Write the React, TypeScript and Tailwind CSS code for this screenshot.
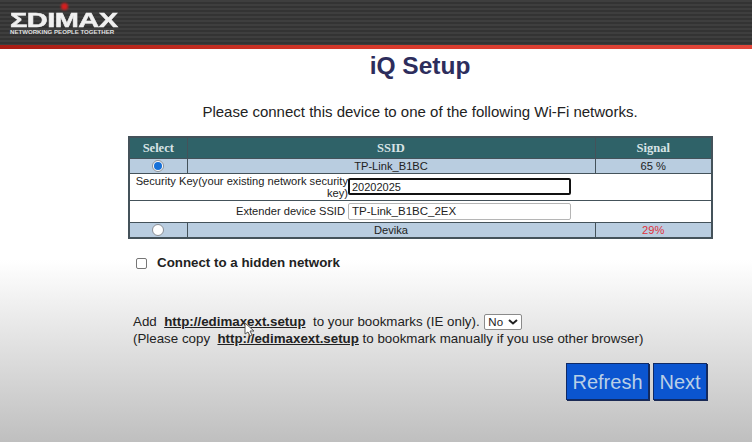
const CELL = 'border border-[#44525a] p-0 text-center align-middle';

function Radio({ checked }: { checked?: boolean }) {
  return (
    <span className="mx-auto mt-[1px] flex size-[12px] items-center justify-center rounded-full border border-[#8a8f96] bg-white">
      {checked && <span className="size-[8px] rounded-full bg-[#1670d8]" />}
    </span>
  );
}

function Logo() {
  return (
    <div className="relative ml-[10px] w-[108px] pt-[12px] text-[#f0f0f0]">
      <span className="absolute left-[51px] top-[3px] size-[7px] rounded-full bg-[#d81e1e] blur-[1px]" />
      <div className="h-[16px] origin-top-left scale-x-[1.38] font-['Liberation_Sans',sans-serif] text-[21px] font-bold leading-[16px] tracking-[-0.4px] [-webkit-text-stroke:0.5px_#f0f0f0]">
        ΣDIMAX
      </div>
      <div className="whitespace-nowrap font-['Liberation_Sans',sans-serif] text-[6.1px] font-bold leading-[7px] text-[#e0e0e0]">
        NETWORKING PEOPLE TOGETHER
      </div>
    </div>
  );
}

export default function App() {
  return (
    <div className="flex h-[442px] w-[752px] flex-col overflow-hidden bg-[linear-gradient(to_bottom,#ffffff_0px,#ffffff_260px,#bfbfbf_442px)] font-['Liberation_Sans',Arial,sans-serif] text-[#222]">
      <header className="h-[51px] shrink-0 bg-white">
        <div className="h-[45px] bg-[repeating-linear-gradient(to_bottom,#3e3e3e_0px,#3e3e3e_2px,#333333_2px,#333333_4px)]">
          <Logo />
        </div>
        <div className="h-[4px] bg-gradient-to-r from-[#a81c14] via-[#d83a2c] to-[#e2463a]" />
      </header>

      <h1 className="ml-[88px] mt-[1px] text-center text-[24.5px] font-bold leading-[28px] text-[#2d2d5c]">iQ Setup</h1>

      <p className="ml-[88px] mt-[23px] text-center text-[15px] leading-[18px]">
        Please connect this device to one of the following Wi-Fi networks.
      </p>

      <table className="ml-[128px] mt-[15px] w-[583px] table-fixed border-collapse border-2 border-[#44525a] text-[11.15px] leading-[12px]">
        <colgroup>
          <col className="w-[58px]" />
          <col className="w-[408px]" />
          <col className="w-[117px]" />
        </colgroup>
        <thead>
          <tr className="h-[21px] bg-[#2f6268] font-['Liberation_Serif',serif] text-[12.5px] font-bold text-[#d8e4e6]">
            <th className={CELL}>Select</th>
            <th className={CELL}>SSID</th>
            <th className={CELL}>Signal</th>
          </tr>
        </thead>
        <tbody>
          <tr className="h-[15px] bg-[#b9cde0]">
            <td className={CELL}><Radio checked /></td>
            <td className={CELL}>TP-Link_B1BC</td>
            <td className={CELL}>65 %</td>
          </tr>
          <tr className="h-[27px] bg-white">
            <td colSpan={3} className="border border-[#44525a] p-0">
              <div className="flex items-center">
                <div className="w-[218px] shrink-0 text-right leading-[12px]">
                  Security Key(your existing network security key)
                </div>
                <input
                  readOnly
                  value="20202025"
                  className="h-[17px] w-[223px] rounded-[2px] border-2 border-[#111] bg-white px-[2px] text-[11px] text-[#222] outline-none"
                />
              </div>
            </td>
          </tr>
          <tr className="h-[22px] bg-white">
            <td colSpan={3} className="border border-[#44525a] p-0">
              <div className="flex items-center">
                <div className="w-[218px] shrink-0 pr-[3px] text-right">Extender device SSID</div>
                <input
                  readOnly
                  value="TP-Link_B1BC_2EX"
                  className="h-[17px] w-[223px] rounded-[2px] border border-[#b5b5b5] bg-white px-[3px] text-[11.5px] text-[#222] outline-none"
                />
              </div>
            </td>
          </tr>
          <tr className="h-[16px] bg-[#b9cde0]">
            <td className={CELL}><Radio /></td>
            <td className={CELL}>Devika</td>
            <td className={`${CELL} text-[#e0333c]`}>29%</td>
          </tr>
        </tbody>
      </table>

      <div className="ml-[136px] mt-[16px] flex items-center gap-[10px]">
        <span className="size-[11px] rounded-[2px] border border-[#767676] bg-white" />
        <span className="text-[13.33px] font-bold leading-[16px]">Connect to a hidden network</span>
      </div>

      <div className="ml-[133px] mt-[42px] text-[13.33px] leading-[18px]">
        <div className="flex h-[17px] items-center whitespace-pre">
          <span>Add  </span>
          <a className="font-bold underline">http://edimaxext.setup</a>
          <span>  to your bookmarks (IE only). </span>
          <span className="ml-[1px] flex h-[16px] w-[38px] items-center justify-between rounded-[2px] border border-[#8a8a8a] bg-white px-[3px] text-[11.5px]">
            No
            <svg width="10" height="6" viewBox="0 0 10 6" fill="none" stroke="#222" strokeWidth="2">
              <path d="M1 1l4 3.5L9 1" />
            </svg>
          </span>
        </div>
        <div className="whitespace-pre">
          <span>(Please copy  </span>
          <a className="font-bold underline">http://edimaxext.setup</a>
          <span> to bookmark manually if you use other browser)</span>
        </div>
      </div>

      <div className="ml-[566px] mt-[15px] flex gap-[4px]">
        <button className="h-[37px] w-[83px] border border-[#0f2a66] bg-[#0b55d0] text-[20px] leading-none text-[#b9cfe6] shadow-[1px_1px_0_#1a2a55]">
          Refresh
        </button>
        <button className="h-[37px] w-[54px] border border-[#0f2a66] bg-[#0b55d0] text-[20px] leading-none text-[#b9cfe6] shadow-[1px_1px_0_#1a2a55]">
          Next
        </button>
      </div>

      {/* mouse pointer over the link */}
      <svg className="absolute left-[244px] top-[322px]" width="12" height="16" viewBox="0 0 12 16">
        <path d="M1 1v11l3-2 2 4 2-1-2-4h4z" fill="#fff" stroke="#555" strokeWidth="1" />
      </svg>
    </div>
  );
}
